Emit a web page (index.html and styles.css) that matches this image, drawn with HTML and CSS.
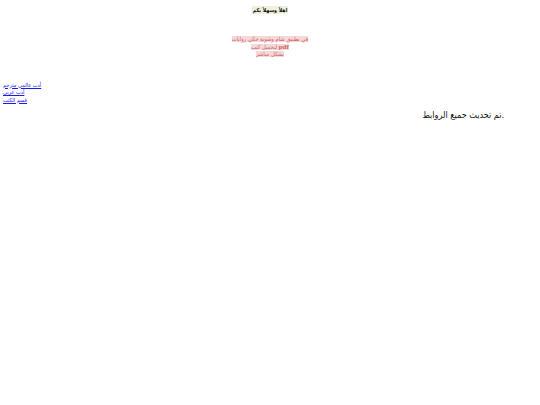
FILE: index.html
```html
<!DOCTYPE html>
<html>
<head>
<meta charset="utf-8">
<link rel="stylesheet" href="styles.css">
</head>
<body>
<div class="head"><span class="title">اهلاً وسهلاً بكم</span></div>
<div class="intro">
  <span class="note">في تطبيق شام وشوية حكي روايات</span><br>
  <span class="note">لتحميل كتب <b class="pdf">pdf</b></span><br>
  <span class="note">بشكل مباشر</span>
</div>
<div class="links">
  <a href="#" class="lnk">أدب عالمي مترجم</a><br>
  <a href="#" class="lnk">أدب عربي</a><br>
  <a href="#" class="lnk">قسم الكتب</a>
</div>
<p class="update">تم تحديث جميع الروابط.</p>
</body>
</html>
```
FILE: styles.css
```css
body {
  margin: 3px;
  font-family: "DejaVu Sans Condensed", "DejaVu Sans", sans-serif;
  font-stretch: condensed;
  background: #ffffff;
}
.head {
  text-align: center;
  padding-top: 3px;
  font-size: 5.3px;
  line-height: 9px;
}
.title {
  background: #f1f0de;
  font-weight: bold;
  color: #111;
  padding: 1px 1px;
}
.intro {
  margin-top: 21px;
  text-align: center;
  font-size: 5.8px;
  line-height: 7.5px;
}
.note {
  background: #f6d8d8;
  color: #c86464;
}
.pdf {
  font-family: "Liberation Serif", serif;
  font-size: 7px;
}
.links {
  margin-top: 23px;
  font-size: 5.6px;
  line-height: 7.5px;
}
.lnk {
  color: #1a1aee;
}
.update {
  margin: 6px 33px 0 0;
  text-align: right;
  font-size: 9px;
  color: #111;
}
```
